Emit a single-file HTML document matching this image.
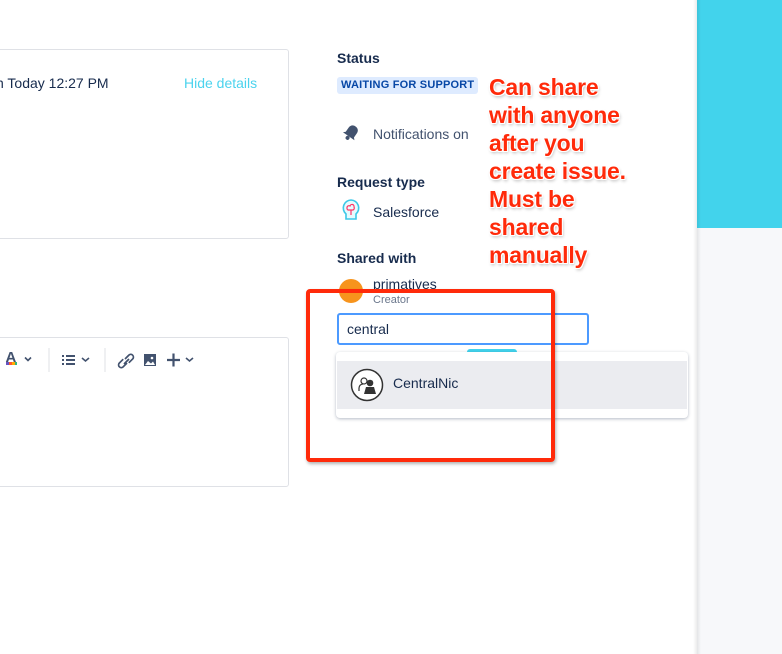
<!DOCTYPE html>
<html><head><meta charset="utf-8"><style>
*{margin:0;padding:0;box-sizing:border-box}
body{width:782px;height:654px;overflow:hidden;background:#fff;font-family:"Liberation Sans",sans-serif;position:relative;color:#172b4d}
.abs{position:absolute}
</style></head><body>
<div class="abs" style="left:697px;top:0;width:85px;height:228px;background:#42d3ec"></div>
<div class="abs" style="left:697px;top:228px;width:85px;height:426px;background:#f7f8fa"></div>
<div class="abs" style="left:693px;top:0;width:8px;height:654px;background:linear-gradient(90deg,rgba(0,0,0,0),rgba(0,0,0,0.08),rgba(0,0,0,0))"></div>

<div class="abs" style="left:-10px;top:49px;width:299px;height:190px;border:1px solid #dfe1e6;border-radius:3px"></div>
<div class="abs" style="left:-4px;top:75px;font-size:14px;color:#172b4d">n Today 12:27 PM</div>
<div class="abs" style="left:184px;top:75px;font-size:14px;color:#4bd3ee">Hide details</div>

<div class="abs" style="left:-10px;top:337px;width:299px;height:150px;border:1px solid #dfe1e6;border-radius:3px"></div>
<svg class="abs" style="left:0;top:340px" width="210" height="40" viewBox="0 0 210 40">
<text x="5.5" y="22" font-family="Liberation Sans" font-size="15" font-weight="bold" fill="#42526e">A</text>
<rect x="6" y="22" width="3" height="3" fill="#6554c0"/><rect x="9" y="22" width="3" height="3" fill="#ff5630"/><rect x="12" y="22" width="3" height="3" fill="#ffab00"/><rect x="15" y="22" width="2" height="3" fill="#36b37e"/>
<path d="M25 17.5l3 3 3-3" stroke="#42526e" stroke-width="1.6" fill="none"/>
<line x1="49" y1="8" x2="49" y2="32" stroke="#dfe1e6"/>
<g fill="#42526e"><rect x="62" y="15" width="2" height="2"/><rect x="66" y="15" width="9" height="2"/><rect x="62" y="19" width="2" height="2"/><rect x="66" y="19" width="9" height="2"/><rect x="62" y="23" width="2" height="2"/><rect x="66" y="23" width="9" height="2"/></g>
<path d="M82 18l3.5 3 3.5-3" stroke="#42526e" stroke-width="1.6" fill="none"/>
<line x1="105" y1="8" x2="105" y2="32" stroke="#dfe1e6"/>
<path d="M125 19l4-4a2.7 2.7 0 0 1 3.8 3.8l-4 4M127 23l-4 4a2.7 2.7 0 0 1-3.8-3.8l4-4M124 24l5-5" stroke="#42526e" stroke-width="1.7" fill="none"/>
<rect x="144" y="14" width="12" height="12" fill="#42526e"/><path d="M145 25l3-4 3 2.5 2-2 2 3.5z" fill="#fff"/><circle cx="152" cy="18" r="1.3" fill="#fff"/>
<path d="M167 20h13M173.5 13.5v13" stroke="#42526e" stroke-width="2.2"/>
<path d="M186 18l3.5 3 3.5-3" stroke="#42526e" stroke-width="1.6" fill="none"/>
</svg>

<div class="abs" style="left:337px;top:50px;font-size:14px;font-weight:bold">Status</div>
<div class="abs" style="left:337px;top:77px;height:17px;padding:0 4px;background:#deebff;border-radius:3px;font-size:11px;font-weight:bold;color:#0747a6;line-height:17px;letter-spacing:0.2px">WAITING FOR SUPPORT</div>
<svg class="abs" style="left:341px;top:123px" width="20" height="20" viewBox="0 0 20 20"><g transform="rotate(35 10 10)"><path d="M10 2c-3 0-5 2-5 5v5l-2 2h14l-2-2V7c0-3-2-5-5-5z" fill="#42526e"/><circle cx="10" cy="16" r="2" fill="#42526e"/></g></svg>
<div class="abs" style="left:373px;top:126px;font-size:14px;color:#42526e">Notifications on</div>
<div class="abs" style="left:337px;top:174px;font-size:14px;font-weight:bold">Request type</div>
<svg class="abs" style="left:340px;top:198px" width="22" height="26" viewBox="0 0 22 26"><path d="M11 2a8 8 0 0 0-5 14v5h10v-5a8 8 0 0 0-5-14z" fill="#e6fbfe" stroke="#3cc8e8" stroke-width="1.6"/><path d="M7 10a2 2 0 0 1 3-2 2 2 0 0 1 4 1 2 2 0 0 1-1 3H8a2 2 0 0 1-1-2zM11 12v5" stroke="#f36" stroke-width="1.2" fill="none"/></svg>
<div class="abs" style="left:373px;top:204px;font-size:14px">Salesforce</div>
<div class="abs" style="left:337px;top:250px;font-size:14px;font-weight:bold">Shared with</div>
<div class="abs" style="left:339px;top:279px;width:24px;height:24px;border-radius:50%;background:#f7941d"></div>
<div class="abs" style="left:373px;top:276px;font-size:14px">primatives</div>
<div class="abs" style="left:373px;top:294px;font-size:11px;color:#6b778c">Creator</div>
<div class="abs" style="left:337px;top:313px;width:252px;height:32px;border:2px solid #4c9aff;border-radius:3px;padding-left:8px;font-size:14px;line-height:28px">central</div>
<div class="abs" style="left:467px;top:349px;width:50px;height:6px;background:#42d3ec;border-radius:3px 3px 0 0"></div>
<div class="abs" style="left:336px;top:352px;width:352px;height:66px;background:#fff;border-radius:4px;box-shadow:0 1px 3px rgba(9,30,66,0.3)"></div>
<div class="abs" style="left:337px;top:361px;width:350px;height:48px;background:#ebecf0"></div>
<svg class="abs" style="left:350px;top:368px" width="34" height="34" viewBox="0 0 34 34"><circle cx="17" cy="17" r="15.5" fill="#fff" stroke="#333" stroke-width="1.5"/><circle cx="14" cy="13" r="3" fill="none" stroke="#333" stroke-width="1.2"/><path d="M9 23v-3a4 4 0 0 1 4-4" fill="none" stroke="#333" stroke-width="1.2"/><circle cx="20" cy="15" r="3.3" fill="#333"/><path d="M14 26l2-7h8l2 7z" fill="#333"/></svg>
<div class="abs" style="left:393px;top:375px;font-size:14px">CentralNic</div>

<div class="abs" style="left:306px;top:289px;width:249px;height:173px;border:4px solid #ff2a0a;border-radius:4px;box-shadow:1px 2px 3px rgba(0,0,0,0.3)"></div>
<div class="abs" style="left:489px;top:73px;font-size:23px;font-weight:bold;line-height:28px;color:#ff2a0a;text-shadow:-1px -1px 0 #fff,1px -1px 0 #fff,-1px 1px 0 #fff,1px 1px 0 #fff,1px 2px 3px rgba(0,0,0,0.3);letter-spacing:-0.2px">Can share<br>with anyone<br>after you<br>create issue.<br>Must be<br>shared<br>manually</div>
</body></html>
